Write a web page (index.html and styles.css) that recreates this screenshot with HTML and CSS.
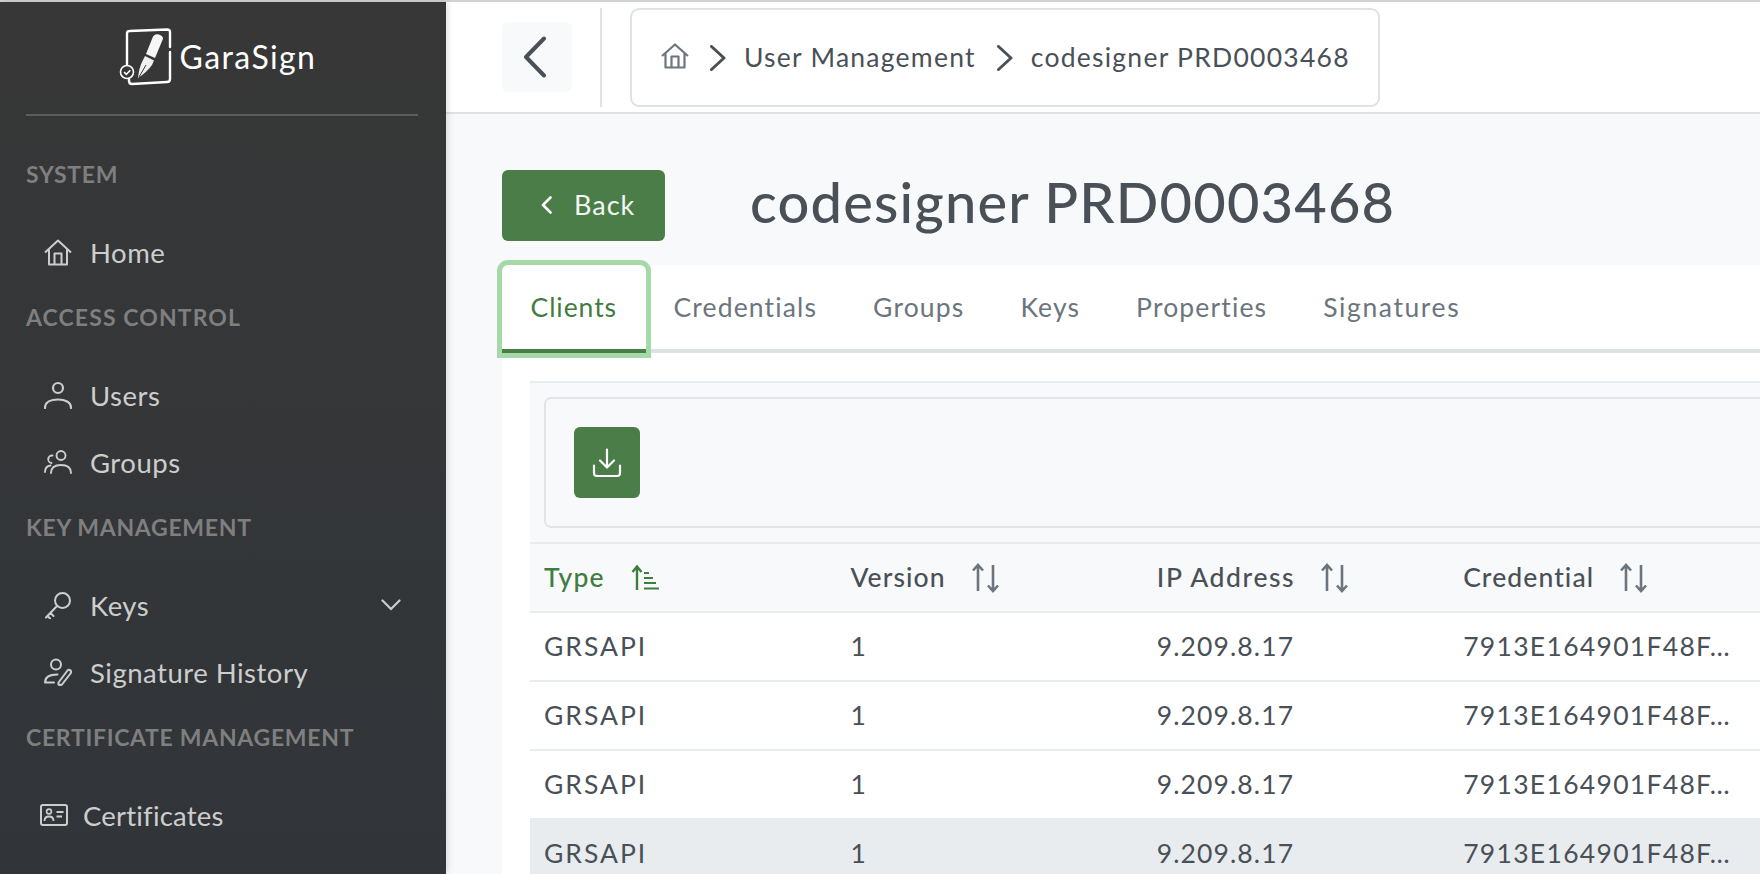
FILE: index.html
```html
<!DOCTYPE html>
<html lang="en">
<head>
<meta charset="utf-8">
<title>codesigner PRD0003468</title>
<link rel="stylesheet" href="styles.css">
</head>
<body>
<div class="app">
  <aside class="sidebar">
    <div class="brand">
      <svg class="brand-mark" viewBox="0 0 60 64" width="60" height="64" fill="none">
        <path d="M11 44V8.500Q11 6 13.500 6L51 4.500Q54 4.500 54 7V22M54 27V54Q54 57 51 57L16 59Q13 59 13 56V54" stroke="#fff" stroke-width="2.400" stroke-linecap="round"/>
        <circle cx="11" cy="47" r="6.500" stroke="#fff" stroke-width="1.600" fill="#363636"/>
        <path d="M8 47l2.300 2.300 4-4" stroke="#fff" stroke-width="1.600"/>
        <path d="M37 11.500Q40 7.500 45 10.500Q48 12.500 46.500 15L39 33L30 29Z" fill="#f6f6f6"/>
        <path d="M29 31L38 35.500L36 40Q31 47 22 53Q23 43 26 37Z" fill="#f0f0f0"/>
        <path d="M23 52L30 40" stroke="#363636" stroke-width="1"/>
      </svg>
      <span class="brand-name">GaraSign</span>
    </div>
    <nav class="nav">
      <h2 class="nav-title">SYSTEM</h2>
      <a class="nav-item"><svg class="nav-icon" viewBox="0 0 28 28" fill="none"><path d="M1 14.500L14 2.500L27 14.500M5 11V26.500H23V11M10.500 26V15.500H17.500V26" stroke="currentColor" stroke-width="2" stroke-linejoin="round"/></svg>Home</a>
      <h2 class="nav-title nav-title-wide">ACCESS CONTROL</h2>
      <a class="nav-item"><svg class="nav-icon" viewBox="0 0 28 28" fill="none"><circle cx="14" cy="7" r="5" stroke="currentColor" stroke-width="2.200"/><path d="M1 27C1 21 7 18.500 14 18.500S27 21 27 27" stroke="currentColor" stroke-width="2.200" stroke-linecap="round"/></svg>Users</a>
      <a class="nav-item"><svg class="nav-icon" viewBox="0 0 28 28" fill="none"><circle cx="17" cy="7.500" r="4.500" stroke="currentColor" stroke-width="1.900"/><path d="M7 25C7 19.500 11 17 17 17S27 19.500 27 25M8.500 7.500A3.700 3.700 0 0 0 7.500 15M1 24C1 20 3 18 6.500 17.500" stroke="currentColor" stroke-width="1.900" stroke-linecap="round"/></svg>Groups</a>
      <h2 class="nav-title">KEY MANAGEMENT</h2>
      <a class="nav-item"><svg class="nav-icon" viewBox="0 0 28 28" fill="none"><circle cx="18.500" cy="9.500" r="7.500" stroke="currentColor" stroke-width="2"/><path d="M13 15L2 26.500M6.500 22L9.500 25M3.500 25L6 27.500" stroke="currentColor" stroke-width="2" stroke-linecap="round"/></svg>Keys<svg class="nav-caret" viewBox="0 0 20 12" fill="none"><path d="M1.500 1.500L10 10L18.500 1.500" stroke="currentColor" stroke-width="2.200" stroke-linecap="round"/></svg></a>
      <a class="nav-item"><svg class="nav-icon" viewBox="0 0 28 28" fill="none"><circle cx="12" cy="6.500" r="5" stroke="currentColor" stroke-width="2"/><path d="M1 24.500C1 19 5.500 16.500 13.500 16.500M1 24.500H10" stroke="currentColor" stroke-width="2" stroke-linecap="round"/><path d="M14.500 24.500L23.500 12.500Q25 11 26.500 12.500Q28 14 26.500 15.500L18 26.500Q15.500 27.500 14.500 26.500Z" stroke="currentColor" stroke-width="2" stroke-linejoin="round"/></svg>Signature History</a>
      <h2 class="nav-title">CERTIFICATE MANAGEMENT</h2>
      <a class="nav-item nav-item-tight"><svg class="nav-icon" viewBox="0 0 28 24" fill="none"><rect x="1" y="2" width="26" height="20" rx="2" stroke="currentColor" stroke-width="2"/><circle cx="9" cy="8.500" r="2.400" stroke="currentColor" stroke-width="1.600"/><path d="M4.500 18C4.500 15 6.500 13.500 9 13.500S13.500 15 13.500 18M16.500 9H23.500M16.500 13.500H22" stroke="currentColor" stroke-width="1.800"/></svg>Certificates</a>
    </nav>
  </aside>

  <main class="main">
    <header class="topbar">
      <button class="collapse" type="button"><svg viewBox="0 0 24 42" width="24" height="42" fill="none"><path d="M21 2.500L3 21L21 39.500" stroke="#495057" stroke-width="4" stroke-linecap="round" stroke-linejoin="round"/></svg></button>
      <span class="topbar-rule"></span>
      <div class="crumbs">
        <svg class="crumb-home" viewBox="0 0 28 26" fill="none"><path d="M1 13L14 1.500L27 13M4.500 10V24.500H23.500V10M10.500 24V13.500H17.500V24" stroke="#6c757d" stroke-width="2.200" stroke-linejoin="round"/></svg>
        <svg class="crumb-sep" viewBox="0 0 16 26" fill="none"><path d="M1.500 1.500L14 13L1.500 24.500" stroke="#495057" stroke-width="3" stroke-linecap="round" stroke-linejoin="round"/></svg>
        <span class="crumb">User Management</span>
        <svg class="crumb-sep" viewBox="0 0 16 26" fill="none"><path d="M1.500 1.500L14 13L1.500 24.500" stroke="#495057" stroke-width="3" stroke-linecap="round" stroke-linejoin="round"/></svg>
        <span class="crumb">codesigner PRD0003468</span>
      </div>
    </header>

    <div class="content">
      <div class="title-row">
        <button class="back" type="button"><svg viewBox="0 0 11 18" width="11" height="18" fill="none"><path d="M9.500 1.500L2 9L9.500 16.500" stroke="#fff" stroke-width="2.600" stroke-linecap="round" stroke-linejoin="round"/></svg><span>Back</span></button>
        <h1 class="title">codesigner PRD0003468</h1>
      </div>

      <div class="panel">
        <div class="tabs">
          <a class="tab tab-active">Clients</a>
          <a class="tab">Credentials</a>
          <a class="tab">Groups</a>
          <a class="tab">Keys</a>
          <a class="tab">Properties</a>
          <a class="tab tab-wide">Signatures</a>
        </div>
        <div class="data">
          <div class="toolbar-wrap">
            <div class="toolbar">
              <button class="export" type="button"><svg viewBox="0 0 30 30" width="30" height="30" fill="none"><path d="M15 1.500V19M8 12.500L15 19.500L22 12.500M2 17.500V25Q2 28 5 28H25Q28 28 28 25V17.500" stroke="#fff" stroke-width="2.200" stroke-linecap="round" stroke-linejoin="round"/></svg></button>
            </div>
          </div>
          <table class="grid">
            <thead>
              <tr>
                <th class="sorted"><span class="th-inner">Type<svg class="sort-on" viewBox="0 0 28 26" fill="none"><path d="M6 25V2M1.500 7L6 1.500L10.500 7" stroke="currentColor" stroke-width="2.400"/><path d="M13 8H18M13 13H22M13 18H25M13 23.500H28" stroke="currentColor" stroke-width="2"/></svg></span></th>
                <th><span class="th-inner">Version<svg class="sort" viewBox="0 0 28 30" fill="none"><path d="M6 28V2M1 7.500L6 2L11 7.500M21 2V28M16 22.500L21 28L26 22.500" stroke="currentColor" stroke-width="2.600"/></svg></span></th>
                <th class="th-ip"><span class="th-inner">IP Address<svg class="sort" viewBox="0 0 28 30" fill="none"><path d="M6 28V2M1 7.500L6 2L11 7.500M21 2V28M16 22.500L21 28L26 22.500" stroke="currentColor" stroke-width="2.600"/></svg></span></th>
                <th><span class="th-inner">Credential<svg class="sort" viewBox="0 0 28 30" fill="none"><path d="M6 28V2M1 7.500L6 2L11 7.500M21 2V28M16 22.500L21 28L26 22.500" stroke="currentColor" stroke-width="2.600"/></svg></span></th>
                <th></th>
              </tr>
            </thead>
            <tbody>
              <tr><td class="td-type">GRSAPI</td><td>1</td><td>9.209.8.17</td><td class="td-cred">7913E164901F48F…</td><td></td></tr>
              <tr><td class="td-type">GRSAPI</td><td>1</td><td>9.209.8.17</td><td class="td-cred">7913E164901F48F…</td><td></td></tr>
              <tr><td class="td-type">GRSAPI</td><td>1</td><td>9.209.8.17</td><td class="td-cred">7913E164901F48F…</td><td></td></tr>
              <tr class="row-hover"><td class="td-type">GRSAPI</td><td>1</td><td>9.209.8.17</td><td class="td-cred">7913E164901F48F…</td><td></td></tr>
            </tbody>
          </table>
        </div>
      </div>
    </div>
  </main>
</div>
</body>
</html>
```
FILE: styles.css
```css
* { box-sizing: border-box; }
html, body { margin: 0; height: 100%; overflow: hidden; }
body { font-family: "Lato", "Noto Sans", sans-serif; font-size: 26.500px; color: #495057; background: #f8f9fa; }
button { font: inherit; border: 0; padding: 0; }

.app { display: flex; height: 874px; border-top: 2px solid #d2d2d2; }

.sidebar { flex: 0 0 446px; background: linear-gradient(#373737, #313539); box-shadow: 2px 0 6px rgba(0,0,0,.12); position: relative; z-index: 2; padding: 0 28px 0 26px; }
.brand { height: 114px; border-bottom: 2px solid #5c5c5c; display: flex; align-items: center; justify-content: center; padding: 0 12px 2px 0; gap: 4px; }
.brand-mark { width: 60px; height: 64px; flex: none; }
.brand-name { color: #fff; font-size: 32px; font-weight: 400; letter-spacing: 1.400px; line-height: 40px; }
.nav { padding-top: 26.500px; }
.nav-title { margin: 11.500px 0 24.500px; height: 40px; line-height: 40px; font-size: 23px; font-weight: 700; color: #7f7f7f; letter-spacing: .7px; white-space: nowrap; }
.nav-title-wide { letter-spacing: 1.100px; }
.nav-item { height: 67px; display: flex; align-items: center; padding-left: 18px; gap: 18px; color: #cdcdcd; font-size: 27.500px; letter-spacing: .5px; white-space: nowrap; }
.nav-item-tight { padding-left: 14px; gap: 15px; letter-spacing: .2px; }
.nav-icon { width: 28px; height: 28px; flex: none; }
.nav-caret { width: 20px; height: 12px; margin-left: auto; margin-right: 17px; flex: none; }

.main { flex: 1; min-width: 0; overflow: hidden; display: flex; flex-direction: column; }
.topbar { flex: none; height: 112px; background: #fff; border-bottom: 2px solid #dee2e6; display: flex; align-items: flex-start; padding: 6px 0 0 56px; }
.collapse { width: 70px; height: 70px; margin-top: 14px; background: #f8f9fa; border-radius: 6px; display: flex; align-items: center; justify-content: center; padding-right: 4px; }
.topbar-rule { width: 2px; height: 99px; background: #dee2e6; margin: 0 28px; }
.crumbs { height: 99px; width: 750px; border: 2px solid #dee2e6; border-radius: 9px; display: flex; align-items: center; padding: 0 0 2px 29px; }
.crumb-home { width: 28px; height: 26px; flex: none; margin-top: -2px; }
.crumb-sep { width: 16px; height: 26px; flex: none; margin: 2px 18px 0 21px; }
.crumb { white-space: nowrap; letter-spacing: 1.250px; }

.content { padding: 56px 0 0 56px; width: 1620px; }
.title-row { display: flex; align-items: center; height: 71px; margin-bottom: 24px; }
.back { width: 163px; height: 71px; border-radius: 6px; background: #4a7d47; color: #f4f7f3; display: flex; align-items: center; padding: 0 0 2px 39px; gap: 22px; font-size: 27px; letter-spacing: 1px; }
.title { margin: 0 0 8px 85px; font-size: 56px; font-weight: 500; color: #495057; letter-spacing: 1.200px; line-height: 1; white-space: nowrap; }

.panel { background: #fff; }
.tabs { display: flex; height: 88px; border-bottom: 4px solid #dee2e6; background: #fff; }
.tab { height: 88px; padding: 0 28px 4px; display: flex; align-items: center; color: #6c757d; letter-spacing: 1.150px; white-space: nowrap; }
.tab-wide { letter-spacing: 1.600px; }
.tab-active { color: #3f7d3f; border-bottom: 4px solid #4a7d47; padding: 0 28.500px; letter-spacing: .950px; box-shadow: 0 0 0 5px #a6d9a8; border-radius: 6px 6px 0 0; position: relative; }

.data { margin: 28px 0 0 28px; }
.toolbar-wrap { background: #f8f9fa; border-top: 2px solid #e9ecef; border-bottom: 2px solid #e9ecef; padding: 14px; }
.toolbar { height: 131px; border: 2px solid #e1e4e8; border-radius: 7px; padding: 28px; }
.export { width: 66px; height: 71px; border-radius: 6px; background: #4a7d47; display: flex; align-items: center; justify-content: center; }

.grid { border-collapse: separate; border-spacing: 0; table-layout: fixed; width: 1532px; }
.grid th, .grid td { text-align: left; padding: 0 14px 2px; white-space: nowrap; font-weight: 400; letter-spacing: 1.100px; }
.grid th { height: 69px; background: #f8f9fa; border-bottom: 2px solid #e9ecef; color: #495057; font-weight: 500; }
.grid td { height: 69px; background: #fff; border-bottom: 2px solid #e9ecef; }
.grid .td-type { letter-spacing: 2px; }
.grid .td-cred { letter-spacing: 1.300px; }
.grid .th-ip { letter-spacing: 1.600px; }
.grid .row-hover td { background: #e9ecef; }
.th-inner { display: flex; align-items: center; gap: 26px; }
.sort, .sort-on { flex: none; width: 28px; height: 30px; color: #6c757d; margin-top: 3px; }
.grid .sorted { color: #3f7d3f; }
.sort-on { height: 26px; color: #3f7d3f; margin-top: 2px; }
```
